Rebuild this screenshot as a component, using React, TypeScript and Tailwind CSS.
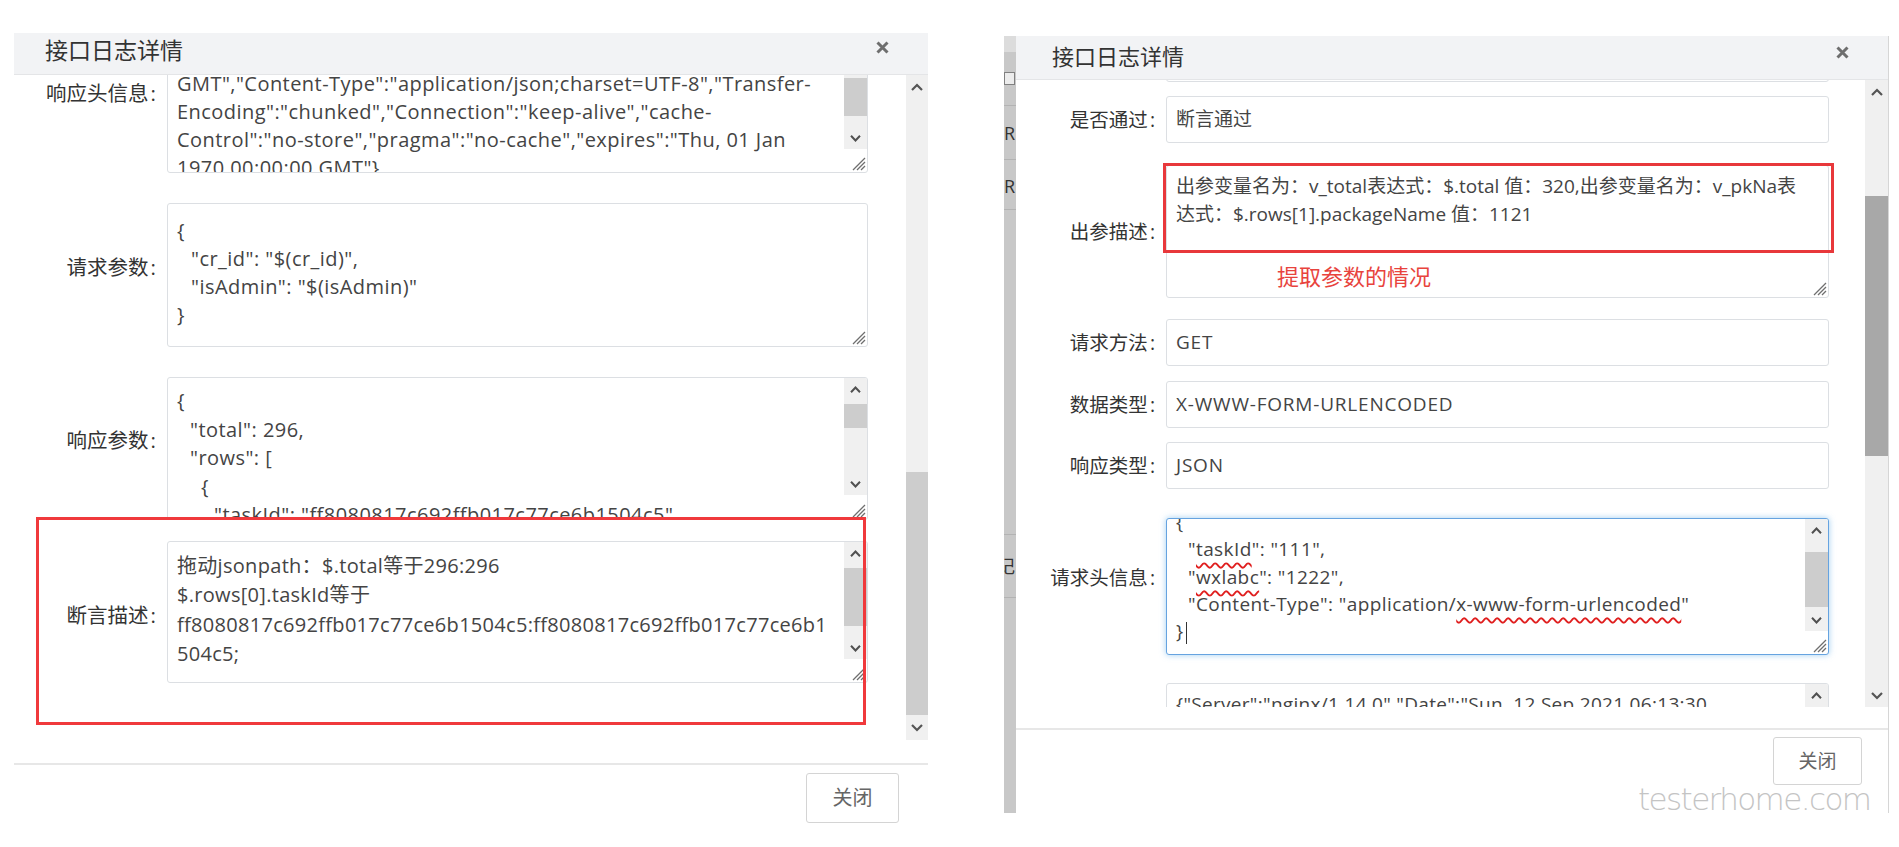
import React from "react";

const Chev = ({ up = false }: { up?: boolean }) => (
  <svg width="11" height="7" viewBox="0 0 11 7" fill="none">
    <path d={up ? "M1 6.2L5.5 1.5L10 6.2" : "M1 0.8L5.5 5.5L10 0.8"} stroke="#505050" strokeWidth="2" />
  </svg>
);

const BigChev = ({ up = false }: { up?: boolean }) => (
  <svg width="12" height="8" viewBox="0 0 12 8" fill="none">
    <path d={up ? "M1 7L6 2L11 7" : "M1 1L6 6L11 1"} stroke="#555" strokeWidth="2.2" />
  </svg>
);

const Grip = () => (
  <svg width="15" height="15" viewBox="0 0 15 15" fill="none">
    <path d="M14 2L2 14M14 6L6 14M14 10L10 14" stroke="#6f6f6f" strokeWidth="1.3" />
  </svg>
);

const XIcon = () => (
  <svg width="13" height="13" viewBox="0 0 13 13" fill="none">
    <path d="M1.5 1.5L11.5 11.5M11.5 1.5L1.5 11.5" stroke="#6e6e6e" strokeWidth="3" />
  </svg>
);

const Lbl = ({ text }: { text: string }) => (
  <>
    {text}
    <span className="ml-[2px] mr-[1px]">:</span>
  </>
);

function TBar({ preCls, thumbCls, postCls }: { preCls: string; thumbCls: string; postCls: string }) {
  return (
    <div className="flex flex-col bg-[#f0f0f0]">
      <div className="flex h-[22px] items-center justify-center">
        <Chev up />
      </div>
      <div className={preCls} />
      <div className={`bg-[#cdcdcd] ${thumbCls}`} />
      <div className={postCls} />
      <div className="flex h-[22px] items-center justify-center">
        <Chev />
      </div>
    </div>
  );
}

function TA({
  cls,
  textCls,
  sideCls = "w-[23px]",
  bar,
  children,
}: {
  cls: string;
  textCls: string;
  sideCls?: string;
  bar?: React.ReactNode;
  children: React.ReactNode;
}) {
  return (
    <div className={`flex shrink-0 overflow-hidden rounded-[3px] border bg-white ${cls}`}>
      <div className={`min-w-0 flex-1 overflow-hidden whitespace-pre text-[#444] ${textCls}`}>{children}</div>
      <div className={`flex shrink-0 flex-col ${sideCls}`}>
        {bar}
        <div className="flex flex-1 items-end justify-end pb-[1px] pr-[1px]">
          <Grip />
        </div>
      </div>
    </div>
  );
}

const W = ({ children }: { children: React.ReactNode }) => (
  <span className="underline decoration-[#e01f1f] decoration-wavy decoration-[1.5px] underline-offset-[6px]">{children}</span>
);

function LeftDialog() {
  const label = "w-[143px] shrink-0 text-right text-[20.5px] leading-[28px] text-[#333]";
  return (
    <div className="relative ml-[14px] mt-[33px] flex w-[914px] shrink-0 flex-col bg-white">
      <div className="flex h-[42px] items-start justify-between border-b border-[#e4e5e7] bg-[#f2f3f5] pl-[31px] pr-[39px] pt-[5px]">
        <span className="text-[23px] leading-[24px] text-[#333]">接口日志详情</span>
        <span className="mt-[3px]">
          <XIcon />
        </span>
      </div>
      <div className="flex h-[665px]">
        <div className="min-w-0 flex-1 overflow-hidden">
          <div className="-mt-[45px] flex">
            <div className={`${label} pt-[49px]`}>
              <Lbl text="响应头信息" />
            </div>
            <TA
              cls="ml-[10px] h-[143px] w-[701px] border-[#dcdfe3]"
              textCls="pl-[9px] pt-[11px] text-[20px] leading-[28px] tracking-[0.45px]"
              bar={<TBar preCls="h-[25px]" thumbCls="h-[38px]" postCls="h-[11px]" />}
            >
              <div>{'{"Server":"nginx/1.14.0","Date":"Sun, 12 Sep 2021 06:13:30'}</div>
              <div>{'GMT","Content-Type":"application/json;charset=UTF-8","Transfer-'}</div>
              <div>{'Encoding":"chunked","Connection":"keep-alive","cache-'}</div>
              <div>{'Control":"no-store","pragma":"no-cache","expires":"Thu, 01 Jan'}</div>
              <div>{'1970 00:00:00 GMT"}'}</div>
            </TA>
          </div>
          <div className="mt-[30px] flex">
            <div className={`${label} pt-[50px]`}>
              <Lbl text="请求参数" />
            </div>
            <TA
              cls="ml-[10px] h-[144px] w-[701px] border-[#dcdfe3]"
              textCls="pl-[9px] pt-[13px] text-[20px] leading-[28px] tracking-[0.45px]"
            >
              <div>{"{"}</div>
              <div className="pl-[14px]">{'"cr_id": "$(cr_id)",'}</div>
              <div className="pl-[14px]">{'"isAdmin": "$(isAdmin)"'}</div>
              <div>{"}"}</div>
            </TA>
          </div>
          <div className="mt-[30px] flex">
            <div className={`${label} pt-[49px]`}>
              <Lbl text="响应参数" />
            </div>
            <TA
              cls="ml-[10px] h-[143px] w-[701px] border-[#dcdfe3]"
              textCls="pl-[9px] pt-[9px] text-[20px] leading-[28.5px] tracking-[0.45px]"
              bar={<TBar preCls="h-[4px]" thumbCls="h-[24px]" postCls="h-[45px]" />}
            >
              <div>{"{"}</div>
              <div className="pl-[13px]">{'"total": 296,'}</div>
              <div className="pl-[13px]">{'"rows": ['}</div>
              <div className="pl-[24px]">{"{"}</div>
              <div className="pl-[37px]">{'"taskId": "ff8080817c692ffb017c77ce6b1504c5",'}</div>
            </TA>
          </div>
          <div className="mt-[21px] flex">
            <div className={`${label} pt-[60px]`}>
              <Lbl text="断言描述" />
            </div>
            <TA
              cls="ml-[10px] h-[142px] w-[701px] border-[#dcdfe3]"
              textCls="pl-[9px] pt-[9px] text-[20px] leading-[29.3px] tracking-[0.3px]"
              bar={<TBar preCls="h-[4px]" thumbCls="h-[58px]" postCls="h-[11px]" />}
            >
              <div>拖动jsonpath：$.total等于296:296</div>
              <div>$.rows[0].taskId等于</div>
              <div>ff8080817c692ffb017c77ce6b1504c5:ff8080817c692ffb017c77ce6b1</div>
              <div>504c5;</div>
            </TA>
          </div>
        </div>
        <div className="flex w-[22px] shrink-0 flex-col bg-[#f0f0f0]">
          <div className="flex h-[24px] items-center justify-center">
            <BigChev up />
          </div>
          <div className="flex-1 pt-[373px]">
            <div className="h-[243px] bg-[#cdcdcd]" />
          </div>
          <div className="flex h-[25px] items-center justify-center">
            <BigChev />
          </div>
        </div>
      </div>
      <div className="mt-[23px] h-[2px] bg-[#e7e7e7]" />
      <div className="flex justify-end pr-[29px] pt-[8px]">
        <div className="flex h-[50px] w-[93px] items-center justify-center rounded-[3px] border border-[#d4d4d4] bg-white text-[20px] text-[#666]">
          关闭
        </div>
      </div>
      <div className="pointer-events-none absolute left-[22px] top-[484px] h-[208px] w-[830px] border-[3px] border-[#f0393c]" />
    </div>
  );
}

function Strip() {
  return (
    <div className="ml-[76px] mt-[36px] flex h-[777px] w-[12px] shrink-0 flex-col overflow-hidden bg-[#c8c8c8] text-[18px] leading-[18px] text-[#333]">
      <div className="h-[16px] shrink-0 bg-[#dcdcdc]" />
      <div className="mt-[20px] h-[13px] w-[11px] shrink-0 border border-[#808080] bg-[#ececec]" />
      <div className="mt-[20px] h-px shrink-0 bg-[#b3b3b3]" />
      <div className="mt-[18px] shrink-0">R</div>
      <div className="mt-[17px] h-px shrink-0 bg-[#b3b3b3]" />
      <div className="mt-[17px] shrink-0">R</div>
      <div className="mt-[14px] h-px shrink-0 bg-[#b3b3b3]" />
      <div className="mt-[324px] h-px shrink-0 bg-[#b3b3b3]" />
      <div className="-ml-[7px] mt-[22px] shrink-0">记</div>
      <div className="mt-[22px] h-px shrink-0 bg-[#b3b3b3]" />
    </div>
  );
}

function RightDialog() {
  const label = "w-[140px] shrink-0 text-right text-[19.5px] leading-[28px] text-[#333]";
  const input =
    "ml-[10px] flex h-[47px] w-[663px] shrink-0 items-center rounded-[3px] border border-[#dcdfe3] bg-white pl-[9px] text-[19px] text-[#444]";
  return (
    <div className="relative mt-[36px] flex w-[873px] shrink-0 flex-col border-r border-[#d6d6d6] bg-white">
      <div className="flex h-[44px] items-start justify-between border-b border-[#e4e5e7] bg-[#f2f3f5] pl-[36px] pr-[39px] pt-[9px]">
        <span className="text-[22px] leading-[22px] text-[#333]">接口日志详情</span>
        <span className="mt-[1px]">
          <XIcon />
        </span>
      </div>
      <div className="flex h-[627px]">
        <div className="min-w-0 flex-1 overflow-hidden">
          <div className="-mt-[45px] flex items-center">
            <div className={label} />
            <div className={input} />
          </div>
          <div className="mt-[14px] flex items-center">
            <div className={label}>
              <Lbl text="是否通过" />
            </div>
            <div className={input}>断言通过</div>
          </div>
          <div className="mt-[22px] flex items-center">
            <div className={label}>
              <Lbl text="出参描述" />
            </div>
            <TA
              cls="ml-[10px] h-[133px] w-[663px] border-[#dcdfe3]"
              textCls="pl-[9px] pt-[6px] text-[19px] leading-[28px]"
              sideCls="w-[16px]"
            >
              <div>出参变量名为：v_total表达式：$.total 值：320,出参变量名为：v_pkNa表</div>
              <div>达式：$.rows[1].packageName 值：1121</div>
            </TA>
          </div>
          <div className="mt-[21px] flex items-center">
            <div className={label}>
              <Lbl text="请求方法" />
            </div>
            <div className={`${input} tracking-[0.8px]`}>GET</div>
          </div>
          <div className="mt-[15px] flex items-center">
            <div className={label}>
              <Lbl text="数据类型" />
            </div>
            <div className={`${input} tracking-[0.8px]`}>X-WWW-FORM-URLENCODED</div>
          </div>
          <div className="mt-[14px] flex items-center">
            <div className={label}>
              <Lbl text="响应类型" />
            </div>
            <div className={`${input} tracking-[0.8px]`}>JSON</div>
          </div>
          <div className="mt-[29px] flex items-start">
            <div className={`${label} pt-[46px]`}>
              <Lbl text="请求头信息" />
            </div>
            <TA
              cls="ml-[10px] h-[137px] w-[663px] border-[#66a3e0] shadow-[0_0_6px_rgba(102,175,233,0.6)]"
              textCls="pl-[9px] text-[19px] leading-[27.3px] tracking-[0.4px]"
              bar={<TBar preCls="h-[11px]" thumbCls="h-[55px]" postCls="h-[2px]" />}
            >
              <div className="-mt-[10px]">{"{"}</div>
              <div className="pl-[12px]">
                "<W>taskId</W>": "111",
              </div>
              <div className="pl-[12px]">
                "<W>wxlabc</W>": "1222",
              </div>
              <div className="pl-[12px]">
                "Content-Type": "application/<W>x-www-form-urlencoded</W>"
              </div>
              <div>
                {"}"}
                <span className="ml-[2px] inline-block h-[22px] w-px bg-[#333] align-middle" />
              </div>
            </TA>
          </div>
          <div className="mt-[28px] flex items-start">
            <div className={`${label} pt-[50px]`}>
              <Lbl text="响应头信息" />
            </div>
            <TA
              cls="ml-[10px] h-[130px] w-[663px] border-[#dcdfe3]"
              textCls="pl-[9px] pt-[6px] text-[19px] leading-[28px] tracking-[0.3px]"
              bar={<TBar preCls="h-[6px]" thumbCls="h-[40px]" postCls="h-[20px]" />}
            >
              <div>{'{"Server":"nginx/1.14.0","Date":"Sun, 12 Sep 2021 06:13:30'}</div>
              <div>{'GMT","Content-Type":"application/json;charset=UTF-8",'}</div>
            </TA>
          </div>
        </div>
        <div className="flex w-[23px] shrink-0 flex-col bg-[#f0f0f0]">
          <div className="flex h-[24px] items-center justify-center">
            <BigChev up />
          </div>
          <div className="flex-1 pt-[92px]">
            <div className="h-[260px] bg-[#a8a8a8]" />
          </div>
          <div className="flex h-[23px] items-center justify-center">
            <BigChev />
          </div>
        </div>
      </div>
      <div className="mt-[21px] h-[2px] bg-[#e7e7e7]" />
      <div className="flex justify-end pb-[28px] pr-[26px] pt-[7px]">
        <div className="flex h-[48px] w-[89px] items-center justify-center rounded-[3px] border border-[#d4d4d4] bg-white text-[19px] text-[#666]">
          关闭
        </div>
      </div>
      <div className="pointer-events-none absolute left-[147px] top-[127px] h-[90px] w-[671px] border-[3px] border-[#e8383b]" />
      <div className="pointer-events-none absolute left-[261px] top-[229px] text-[22px] leading-[22px] text-[#e8433d]">
        提取参数的情况
      </div>
    </div>
  );
}

export default function App() {
  return (
    <div className="relative flex h-[847px] w-[1899px] items-start overflow-hidden bg-white font-['Open_Sans','Noto_Sans_CJK_SC',sans-serif]">
      <LeftDialog />
      <Strip />
      <RightDialog />
      <div className="pointer-events-none absolute left-[1638px] top-[784px] whitespace-pre font-['DejaVu_Sans',sans-serif] text-[31px] font-extralight leading-none tracking-[-1.6px] text-[#c4c4c4]">
        testerhome.com
      </div>
    </div>
  );
}
